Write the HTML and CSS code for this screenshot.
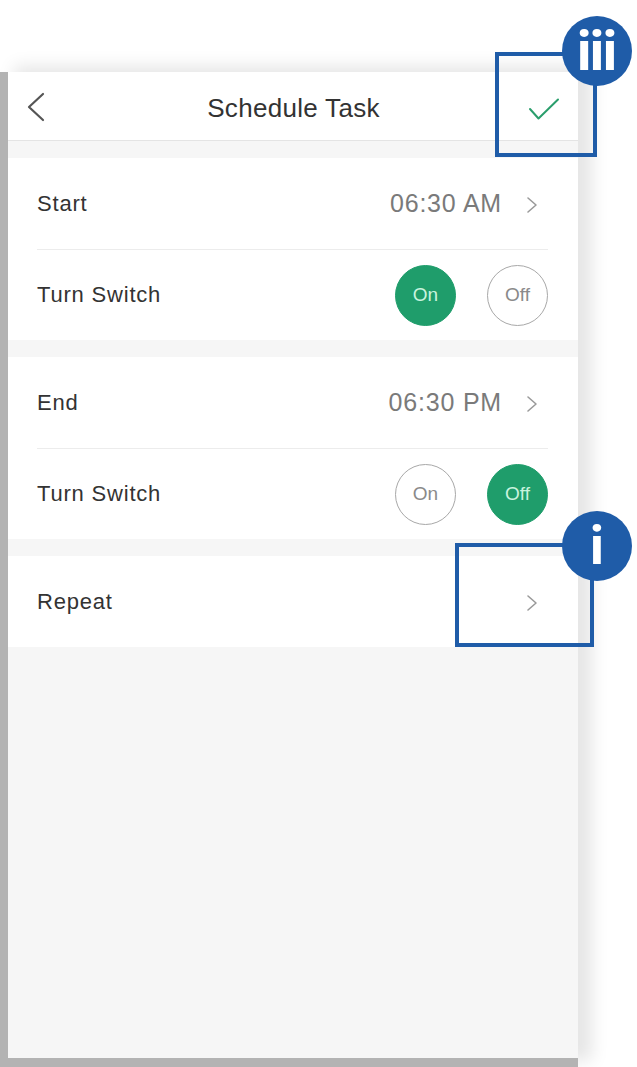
FILE: index.html
```html
<!DOCTYPE html>
<html lang="en">
<head>
<meta charset="utf-8">
<title>Schedule Task</title>
<link rel="stylesheet" href="styles.css">
</head>
<body>
<div class="stage">
  <div class="screen">
    <header class="topbar">
      <span class="back">
        <svg width="18" height="30" viewBox="0 0 18 30"><path d="M16 2 L2 15 L16 28" fill="none" stroke="#555" stroke-width="2.2" stroke-linecap="round" stroke-linejoin="round"/></svg>
      </span>
      <h1 class="title">Schedule Task</h1>
      <span class="done">
        <svg width="32" height="24" viewBox="0 0 32 24"><path d="M2 12 L10.5 21.5 L30 2.5" fill="none" stroke="#2a9e6c" stroke-width="2" stroke-linecap="round" stroke-linejoin="round"/></svg>
      </span>
    </header>

    <section class="group">
      <div class="row">
        <span class="label">Start</span>
        <span class="value">06:30 AM</span>
        <svg class="chev" width="12" height="18" viewBox="0 0 12 18"><path d="M2 2 L10 9 L2 16" fill="none" stroke="#9a9a9a" stroke-width="1.6" stroke-linecap="round" stroke-linejoin="round"/></svg>
      </div>
      <div class="row toggle-row">
        <span class="label">Turn Switch</span>
        <div class="toggles">
          <span class="pill active">On</span>
          <span class="pill">Off</span>
        </div>
      </div>
    </section>

    <section class="group">
      <div class="row">
        <span class="label">End</span>
        <span class="value">06:30 PM</span>
        <svg class="chev" width="12" height="18" viewBox="0 0 12 18"><path d="M2 2 L10 9 L2 16" fill="none" stroke="#9a9a9a" stroke-width="1.6" stroke-linecap="round" stroke-linejoin="round"/></svg>
      </div>
      <div class="row toggle-row">
        <span class="label">Turn Switch</span>
        <div class="toggles">
          <span class="pill">On</span>
          <span class="pill active">Off</span>
        </div>
      </div>
    </section>

    <section class="group">
      <div class="row">
        <span class="label">Repeat</span>
        <span class="value"></span>
        <svg class="chev" width="12" height="18" viewBox="0 0 12 18"><path d="M2 2 L10 9 L2 16" fill="none" stroke="#9a9a9a" stroke-width="1.6" stroke-linecap="round" stroke-linejoin="round"/></svg>
      </div>
    </section>
  </div>

  <div class="callout-box box-done"></div>
  <div class="callout-badge badge-done">iii</div>
  <div class="callout-box box-repeat"></div>
  <div class="callout-badge badge-repeat">i</div>
</div>
</body>
</html>
```

FILE: styles.css
```css
* { box-sizing: border-box; }

html, body {
  margin: 0;
  padding: 0;
  background: #ffffff;
}

body {
  font-family: "Liberation Sans", Arial, sans-serif;
  color: #333;
}

.stage {
  position: relative;
  width: 637px;
  height: 1067px;
  overflow: hidden;
  padding-top: 72px;
}

.screen {
  width: 578px;
  height: 995px;
  background: #f6f6f6;
  border-left: 8px solid #b3b3b3;
  border-bottom: 9px solid #b3b3b3;
  box-shadow: 14px -6px 16px rgba(0, 0, 0, 0.10);
  display: flex;
  flex-direction: column;
  gap: 17px;
}

.topbar {
  height: 69px;
  flex: none;
  background: #fff;
  border-bottom: 1px solid #e4e4e4;
  display: grid;
  grid-template-columns: 1fr auto 1fr;
  align-items: center;
  padding: 0 18px 0 19px;
}

.back {
  display: flex;
  align-items: center;
  justify-self: start;
  margin-top: 1px;
}

.done {
  display: flex;
  justify-self: end;
  margin-top: 6px;
}

.title {
  margin: 5px 0 0;
  font-size: 26px;
  font-weight: 400;
  color: #333;
  letter-spacing: 0.3px;
}

.group {
  background: #fff;
  display: flex;
  flex-direction: column;
  flex: none;
}

.row {
  height: 91px;
  display: flex;
  align-items: center;
  padding: 0 40px 0 29px;
}

.row + .row {
  border-top: 1px solid #ececec;
  margin: 0 30px 0 29px;
  padding: 0;
}

.label {
  font-size: 22px;
  letter-spacing: 0.8px;
  color: #333;
  flex: 1;
}

.value {
  font-size: 25px;
  letter-spacing: 0.8px;
  color: #7a7a7a;
  margin-right: 24px;
}

.chev {
  display: block;
  margin-top: 2px;
}

.toggles {
  display: flex;
  gap: 31px;
}

.pill {
  width: 61px;
  height: 61px;
  border-radius: 50%;
  border: 1.5px solid #a8a8a8;
  display: flex;
  align-items: center;
  justify-content: center;
  font-size: 19px;
  color: #8a8a8a;
}

.pill.active {
  background: #1f9d6b;
  border-color: #1f9d6b;
  color: #c9f3de;
}

.callout-box {
  position: absolute;
  border: 4.5px solid #1f5ca8;
}

.box-done {
  left: 495px;
  top: 52px;
  width: 102px;
  height: 105px;
}

.box-repeat {
  left: 455px;
  top: 543px;
  width: 139px;
  height: 104px;
}

.callout-badge {
  position: absolute;
  width: 70px;
  height: 70px;
  border-radius: 50%;
  background: #1f5ca8;
  color: #fff;
  font-family: Roboto, "Liberation Sans", sans-serif;
  font-weight: 700;
  line-height: 70px;
  text-align: center;
}

.badge-done {
  left: 562px;
  top: 16px;
  font-size: 56px;
  letter-spacing: -2px;
  text-indent: -2px;
}

.badge-repeat {
  left: 562px;
  top: 511px;
  font-size: 54px;
}
```
